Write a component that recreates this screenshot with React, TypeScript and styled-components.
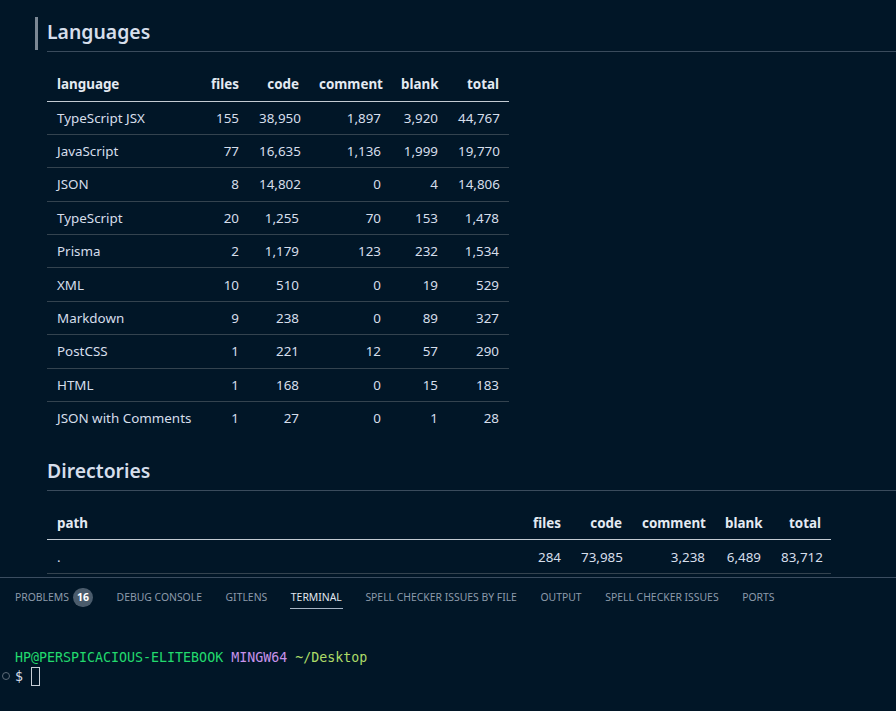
import React from "react";
import styled, { createGlobalStyle } from "styled-components";

const Global = createGlobalStyle`
  html, body { margin: 0; padding: 0; background: #011627; }
  body { overflow: hidden; }
  #root { height: 100vh; }
`;

const Shell = styled.div`
  height: 100vh;
  display: flex;
  flex-direction: column;
  background: #011627;
  font-family: "Segoe UI", "Noto Sans", sans-serif;
  color: #d6deeb;
`;

const Preview = styled.div`
  flex: 1;
  overflow: hidden;
  padding: 17px 0 0 47px;
  font-size: 13.4px;
`;

const Heading = styled.h2<{ $active?: boolean }>`
  position: relative;
  margin: 0;
  font-size: 19.4px;
  font-weight: 600;
  line-height: 30px;
  padding-bottom: 4px;
  border-bottom: 1px solid #3a4b5c;
  color: #d6deeb;
  &::before {
    content: "";
    display: ${(p) => (p.$active ? "block" : "none")};
    position: absolute;
    left: -12px;
    top: 0;
    bottom: 1px;
    width: 3px;
    background: #7b8794;
  }
`;

const Section = styled.section<{ $gap: number }>`
  margin-top: ${(p) => p.$gap}px;
`;

const Table = styled.table<{ $width: number }>`
  margin-top: 16px;
  border-collapse: collapse;
  table-layout: fixed;
  width: ${(p) => p.$width}px;
  font-size: 13.4px;
`;

const Th = styled.th<{ $w: number; $left?: boolean }>`
  width: ${(p) => p.$w}px;
  height: 33px;
  padding: 0 10px;
  text-align: ${(p) => (p.$left ? "left" : "right")};
  font-weight: 700;
  color: #e4eaf2;
  border-bottom: 1px solid #c3cbd3;
  box-sizing: border-box;
  white-space: nowrap;
`;

const Td = styled.td<{ $left?: boolean }>`
  height: 33.4px;
  padding: 0 10px;
  text-align: ${(p) => (p.$left ? "left" : "right")};
  color: #d6deeb;
  white-space: nowrap;
  box-sizing: border-box;
`;

const Tr = styled.tr<{ $last?: boolean }>`
  border-bottom: ${(p) => (p.$last ? "none" : "1px solid #34434f")};
`;

const Panel = styled.div`
  height: 133px;
  border-top: 1px solid #3b4d60;
  display: flex;
  flex-direction: column;
`;

const Tabs = styled.div`
  display: flex;
  align-items: center;
  height: 35px;
  padding: 2px 0 0 15px;
  gap: 23.6px;
`;

const Tab = styled.div<{ $active?: boolean }>`
  position: relative;
  display: flex;
  align-items: center;
  gap: 4px;
  font-size: 10.4px;
  line-height: 35px;
  color: ${(p) => (p.$active ? "#e0e6ee" : "#8d9bab")};
  text-transform: uppercase;
  &::after {
    content: "";
    display: ${(p) => (p.$active ? "block" : "none")};
    position: absolute;
    left: -1px;
    right: -1px;
    bottom: 6px;
    height: 1px;
    background: #a6b4c4;
  }
`;

const Badge = styled.span`
  display: inline-flex;
  align-items: center;
  justify-content: center;
  min-width: 20px;
  height: 19px;
  border-radius: 10px;
  background: #4b5c6c;
  color: #ffffff;
  font-size: 10.5px;
  font-weight: 700;
`;

const Terminal = styled.div`
  padding: 34px 0 0 15px;
  font-family: "DejaVu Sans Mono", "Liberation Mono", monospace;
  font-size: 13.3px;
  line-height: 18px;
`;

const Line = styled.div`
  position: relative;
  white-space: pre;
  display: flex;
  align-items: center;
`;

const Seg = styled.span<{ $c: string }>`
  color: ${(p) => p.$c};
`;

const Mark = styled.span`
  position: absolute;
  left: -13px;
  top: 5px;
  width: 6px;
  height: 6px;
  border: 1px solid #5d6b78;
  border-radius: 50%;
`;

const Cursor = styled.span`
  display: inline-block;
  width: 7px;
  height: 17px;
  border: 1px solid #c8d0d8;
  margin-left: 8px;
`;

type Col = { key: string; w: number; left?: boolean };

const langCols: Col[] = [
  { key: "language", w: 154, left: true },
  { key: "files", w: 48 },
  { key: "code", w: 60 },
  { key: "comment", w: 82 },
  { key: "blank", w: 57 },
  { key: "total", w: 61 },
];

const langRows = [
  ["TypeScript JSX", "155", "38,950", "1,897", "3,920", "44,767"],
  ["JavaScript", "77", "16,635", "1,136", "1,999", "19,770"],
  ["JSON", "8", "14,802", "0", "4", "14,806"],
  ["TypeScript", "20", "1,255", "70", "153", "1,478"],
  ["Prisma", "2", "1,179", "123", "232", "1,534"],
  ["XML", "10", "510", "0", "19", "529"],
  ["Markdown", "9", "238", "0", "89", "327"],
  ["PostCSS", "1", "221", "12", "57", "290"],
  ["HTML", "1", "168", "0", "15", "183"],
  ["JSON with Comments", "1", "27", "0", "1", "28"],
];

const dirCols: Col[] = [
  { key: "path", w: 476, left: true },
  { key: "files", w: 48 },
  { key: "code", w: 61 },
  { key: "comment", w: 83 },
  { key: "blank", w: 56 },
  { key: "total", w: 60 },
];

const dirRows = [[".", "284", "73,985", "3,238", "6,489", "83,712"]];

function DataTable({ cols, rows, width, lastBorder }: { cols: Col[]; rows: string[][]; width: number; lastBorder?: boolean }) {
  return (
    <Table $width={width}>
      <thead>
        <tr>
          {cols.map((c) => (
            <Th key={c.key} $w={c.w} $left={c.left}>
              {c.key}
            </Th>
          ))}
        </tr>
      </thead>
      <tbody>
        {rows.map((r, i) => (
          <Tr key={i} $last={!lastBorder && i === rows.length - 1}>
            {r.map((v, j) => (
              <Td key={j} $left={cols[j].left}>
                {v}
              </Td>
            ))}
          </Tr>
        ))}
      </tbody>
    </Table>
  );
}

const tabs = [
  "Problems",
  "Debug Console",
  "GitLens",
  "Terminal",
  "Spell Checker Issues by File",
  "Output",
  "Spell Checker Issues",
  "Ports",
];

export default function App() {
  return (
    <>
      <Global />
      <Shell>
        <Preview>
          <Section $gap={0}>
            <Heading $active>Languages</Heading>
            <DataTable cols={langCols} rows={langRows} width={462} />
          </Section>
          <Section $gap={21}>
            <Heading>Directories</Heading>
            <DataTable cols={dirCols} rows={dirRows} width={784} lastBorder />
          </Section>
        </Preview>
        <Panel>
          <Tabs>
            {tabs.map((t) => (
              <Tab key={t} $active={t === "Terminal"}>
                {t}
                {t === "Problems" && <Badge>16</Badge>}
              </Tab>
            ))}
          </Tabs>
          <Terminal>
            <Line>
              <Seg $c="#22da6e">HP@PERSPICACIOUS-ELITEBOOK </Seg>
              <Seg $c="#c792ea">MINGW64 </Seg>
              <Seg $c="#addb67">~/Desktop</Seg>
            </Line>
            <Line>
              <Mark />
              <Seg $c="#d6deeb">$</Seg>
              <Cursor />
            </Line>
          </Terminal>
        </Panel>
      </Shell>
    </>
  );
}
